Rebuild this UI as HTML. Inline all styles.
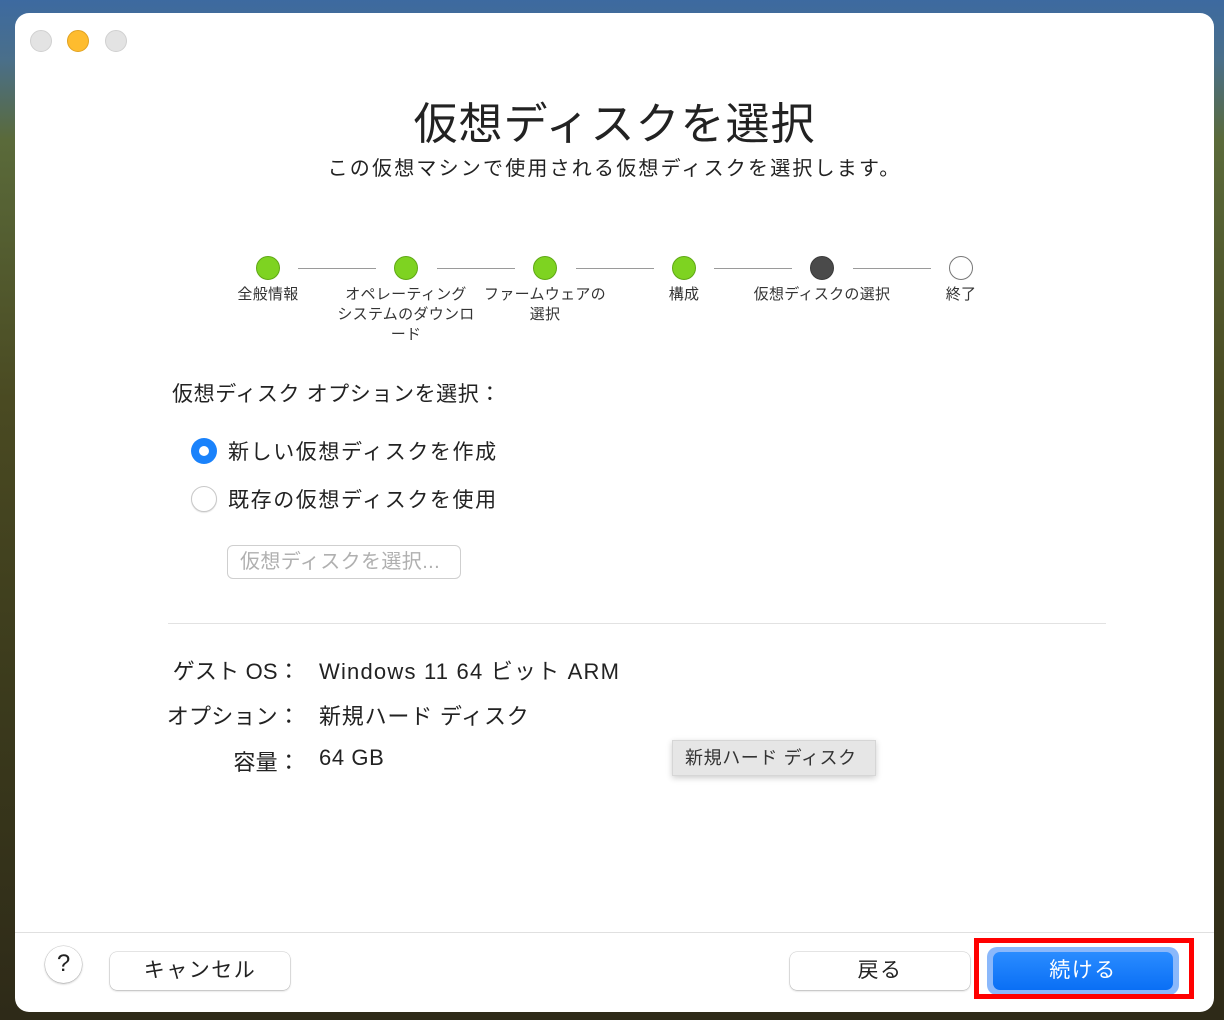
<!DOCTYPE html>
<html><head><meta charset="utf-8"><style>
*{margin:0;padding:0;box-sizing:border-box}
body{width:1224px;height:1020px;overflow:hidden;position:relative;font-family:"Liberation Sans","Noto Sans CJK JP",sans-serif;color:#222;
background:linear-gradient(180deg,#3d6aa0 0px,#4a6f8a 60px,#5a6a3a 140px,#4a4a22 400px,#3b3a1c 700px,#2e2a18 1020px)}
.win{position:absolute;left:15px;top:13px;width:1199px;height:999px;background:#fff;border-radius:14px;overflow:hidden}
.tl{position:absolute;top:17px;width:22px;height:22px;border-radius:50%;background:#e3e3e3;border:1px solid #d0d0d0}
.abs{position:absolute;white-space:nowrap}
.dot{position:absolute;width:24px;height:24px;border-radius:50%;background:#7ed321;border:1px solid #5fa815}
.line{position:absolute;height:1px;background:#9a9a9a;top:255px}
.lbl{position:absolute;font-size:15px;color:#333;text-align:center;line-height:20px;width:150px;letter-spacing:0.3px}
.btn{position:absolute;background:#fff;border-radius:7px;box-shadow:0 0 0 0.5px rgba(0,0,0,.18),0 1px 2px rgba(0,0,0,.2);font-size:21px;text-align:center;line-height:38px;letter-spacing:1.5px}
</style></head><body>
<div class="win">
<div class="tl" style="left:15px"></div>
<div class="tl" style="left:52px;background:#febc2e;border-color:#e1a221"></div>
<div class="tl" style="left:90px"></div>

<div class="abs" style="left:0;width:1199px;text-align:center;top:75px;font-size:44px;color:#222;letter-spacing:1px">仮想ディスクを選択</div>
<div class="abs" style="left:0;width:1199px;text-align:center;top:139px;font-size:20px;color:#222;letter-spacing:2.2px">この仮想マシンで使用される仮想ディスクを選択します。</div>

<div class="line" style="left:283px;width:78px"></div>
<div class="line" style="left:422px;width:78px"></div>
<div class="line" style="left:561px;width:78px"></div>
<div class="line" style="left:699px;width:78px"></div>
<div class="line" style="left:838px;width:78px"></div>
<div class="dot" style="left:241px;top:243px"></div>
<div class="dot" style="left:379px;top:243px"></div>
<div class="dot" style="left:518px;top:243px"></div>
<div class="dot" style="left:657px;top:243px"></div>
<div class="dot" style="left:795px;top:243px;background:#4a4a4a;border-color:#3a3a3a"></div>
<div class="dot" style="left:934px;top:243px;background:#fff;border-color:#777"></div>
<div class="lbl" style="left:178px;top:272px">全般情報</div>
<div class="lbl" style="left:316px;top:272px">オペレーティング<br>システムのダウンロ<br>ード</div>
<div class="lbl" style="left:455px;top:272px">ファームウェアの<br>選択</div>
<div class="lbl" style="left:594px;top:272px">構成</div>
<div class="lbl" style="left:732px;top:272px">仮想ディスクの選択</div>
<div class="lbl" style="left:871px;top:272px">終了</div>

<div class="abs" style="left:157px;top:365px;font-size:21px;letter-spacing:0.6px">仮想ディスク オプションを選択：</div>
<div class="abs" style="left:176px;top:425px;width:26px;height:26px;border-radius:50%;background:#1a82fb"><div style="position:absolute;left:8px;top:8px;width:10px;height:10px;border-radius:50%;background:#fff"></div></div>
<div class="abs" style="left:213px;top:423px;font-size:21px;letter-spacing:1.6px">新しい仮想ディスクを作成</div>
<div class="abs" style="left:176px;top:473px;width:26px;height:26px;border-radius:50%;background:#fff;border:1px solid #c8c8c8;box-shadow:0 1px 1px rgba(0,0,0,.1)"></div>
<div class="abs" style="left:213px;top:471px;font-size:21px;letter-spacing:1.6px">既存の仮想ディスクを使用</div>
<div class="abs" style="left:212px;top:532px;width:234px;height:34px;border:1px solid #cfcfcf;border-radius:6px;font-size:20px;color:#b0b0b0;line-height:32px;padding-left:12px;letter-spacing:0.4px">仮想ディスクを選択...</div>

<div class="abs" style="left:153px;top:610px;width:938px;height:1px;background:#e2e2e2"></div>

<div class="abs" style="left:0;width:285px;text-align:right;top:641px;font-size:22px;letter-spacing:0.2px">ゲスト OS：</div>
<div class="abs" style="left:304px;top:641px;font-size:22px;letter-spacing:1.2px">Windows 11 64 ビット ARM</div>
<div class="abs" style="left:0;width:285px;text-align:right;top:686px;font-size:22px;letter-spacing:0.2px">オプション：</div>
<div class="abs" style="left:304px;top:686px;font-size:22px;letter-spacing:0.8px">新規ハード ディスク</div>
<div class="abs" style="left:0;width:285px;text-align:right;top:732px;font-size:22px;letter-spacing:0.2px">容量：</div>
<div class="abs" style="left:304px;top:732px;font-size:22px;letter-spacing:0.6px">64 GB</div>
<div class="abs" style="left:657px;top:727px;width:204px;height:36px;background:#e6e6e6;border:1px solid #d6d6d6;box-shadow:0 2px 6px rgba(0,0,0,.2);font-size:18px;line-height:34px;padding-left:12px;color:#333;letter-spacing:0.6px">新規ハード ディスク</div>

<div class="abs" style="left:0;top:919px;width:1199px;height:1px;background:#e0e0e0"></div>
<div class="abs" style="left:30px;top:933px;width:37px;height:37px;border-radius:50%;background:#fff;box-shadow:0 0 0 .5px rgba(0,0,0,.2),0 1px 2px rgba(0,0,0,.25);text-align:center;font-size:24px;line-height:36px">?</div>
<div class="btn" style="left:95px;top:939px;width:180px;height:38px">キャンセル</div>
<div class="btn" style="left:775px;top:939px;width:180px;height:38px">戻る</div>
<div class="abs" style="left:972px;top:934px;width:192px;height:48px;border-radius:10px;background:#8ab8fb"></div>
<div class="abs" style="left:978px;top:939px;width:180px;height:38px;border-radius:7px;background:linear-gradient(#2a8cff,#0a6ff5);color:#fff;font-size:21px;text-align:center;line-height:38px;letter-spacing:1.5px">続ける</div>
</div>
<div class="abs" style="left:974px;top:938px;width:220px;height:61px;border:5px solid #f00"></div>
</body></html>
